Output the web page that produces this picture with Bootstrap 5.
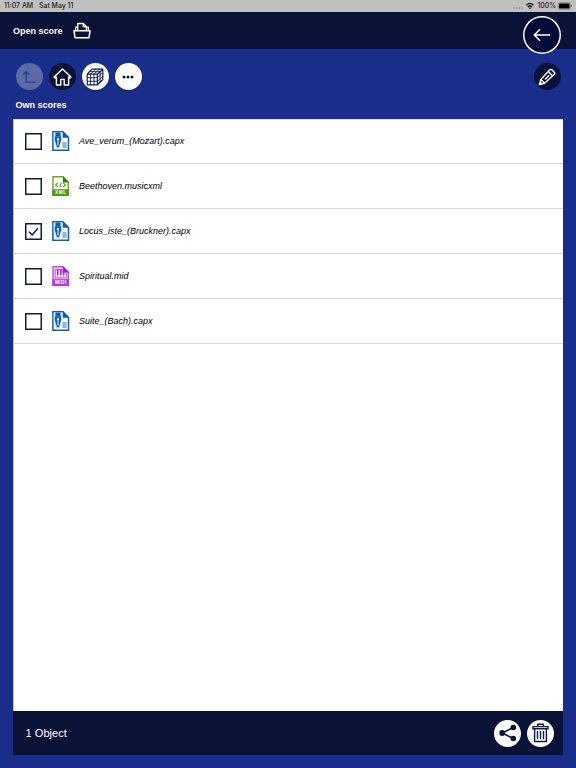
<!DOCTYPE html>
<html lang="en">
<head>
<meta charset="utf-8">
<meta name="viewport" content="width=device-width, initial-scale=1">
<title>Open score</title>
<link href="https://cdn.jsdelivr.net/npm/bootstrap@5.3.0/dist/css/bootstrap.min.css" rel="stylesheet">
<style>
body{font-family:"Liberation Sans",Arial,sans-serif;background:#1b2d8a;color:#fff;height:768px;overflow:hidden}
svg{display:block;flex:none}
.status-bar{height:12px;background:#c0c0c0;color:#1c1c1c;font:6.9px/12px Inter,sans-serif;padding:0 4px}
.status-bar .day{margin-left:6px}
.status-text{font-weight:500}
.title-bar{height:37px;background:#0a1237;padding:0 13px}
.title-text{font-size:9px;font-weight:700;line-height:12px;width:60px;white-space:nowrap}
.back-btn{top:16px;right:15px;width:38px;height:38px;border:0;box-shadow:inset 0 0 0 1.5px #fff;background:#030b38}
.tools{padding:14px 15.5px 0 15.5px;height:50px}
.round-btn{width:27px;height:27px;border:0;padding:0;border-radius:50%;display:flex;align-items:center;justify-content:center;flex:none}
.on-dark{background:#0a1237}
.on-light{background:#fff;box-shadow:0 1px 1px #0a123780}
.off{background:#5c6aa8}
.section-title{font-size:9px;font-weight:700;line-height:12px;padding-left:15.5px;height:20px}
.panel{margin:0 13px;width:550px}
.files{height:592px;background:#fff;border-top:1px solid #d9dae6;border-left:1px solid #b5bbd9;border-radius:0}
.files .list-group-item{height:45px;padding:0 0 0 11px;border:0;border-bottom:1px solid #d4d5d9;border-radius:0;color:#000;background:#fff}
.files .list-group-item:first-child{height:44px;padding-bottom:1px}
.files .tick{width:17px;height:17px;border:0;border-radius:0;margin:0;background:#fff;box-shadow:inset 0 0 0 1.5px #111a45}
.tick-wrap{width:17px;height:17px}
.tick-wrap svg{left:0;top:0;pointer-events:none}
.file-icon{margin-left:9.5px}
.file-name{font-size:9px;font-style:italic;line-height:12px;margin-left:9.5px}
.foot{height:44px;background:#0a1237;padding:0 9px 0 12.5px}
.foot-text{font-size:11.1px}
</style>
<script src="https://cdn.jsdelivr.net/npm/bootstrap@5.3.0/dist/js/bootstrap.bundle.min.js"></script>
</head>
<body>
<svg width="0" height="0" class="position-absolute" aria-hidden="true">
  <symbol id="capx" viewBox="0 0 18 20">
    <path d="M.9.8h10l5.6 5.8v12.6H.9z" fill="#fff" stroke="#0e5cab" stroke-width="1.5"/>
    <path d="M1.7 1.6h9v6L9 12 7 18.4H4.6L1.7 12z" fill="#cfe1f3"/>
    <path d="M3.5 1.5h5v3.4h-5zM3 5.2h6l.2 3.6-2.2 7.4H5L2.8 8.8z" fill="#0e5cab"/>
    <path d="M6 8v6.5" stroke="#fff" stroke-width="1"/><circle cx="6" cy="8" r="1.1" fill="#fff"/>
    <path d="M10.8.5 16.9 6.8h-6.1z" fill="#0e5cab"/>
    <path d="M10.3 12h4.4M10.3 14h4.4M10.3 16h4.4" stroke="#6ba0d5" stroke-width="1.3"/>
  </symbol>
</svg>

<div class="status-bar d-flex align-items-center">
  <span class="status-text">11:07 AM</span><span class="status-text day">Sat May 11</span>
  <div class="ms-auto d-flex align-items-center">
    <svg width="10" height="12" viewBox="0 0 10 12" fill="#8a8a8a"><circle cx="1" cy="8" r=".8"/><circle cx="3.7" cy="8" r=".8"/><circle cx="6.4" cy="8" r=".8"/><circle cx="9.1" cy="8" r=".8"/></svg>
    <svg class="wifi" width="14" height="12" viewBox="-3 0 14 12" fill="none" stroke="#111" stroke-width="1.3"><path d="M.5 5.2Q4 1.8 7.5 5.2M1.9 6.9Q4 5 6.1 6.9"/><path d="M3 7.8h2L4 9z" fill="#111" stroke-width=".3"/></svg>
    <span class="status-text">100%</span>
    <svg width="16" height="12" viewBox="0 0 16 12"><rect x="2.3" y="2.7" width="12" height="6.6" rx="1.6" fill="none" stroke="#666" stroke-width=".6"/><rect x="3" y="3.4" width="10.6" height="5.2" rx="1" fill="#050505"/><path d="M15.2 5v2" stroke="#666"/></svg>
  </div>
</div>

<header class="title-bar d-flex align-items-center">
  <div class="title-text">Open score</div>
  <svg width="18" height="18" viewBox="0 0 18 18" fill="none" stroke="#fff" stroke-width="1.3" stroke-linejoin="round">
    <path d="M4.7 8V1.5h5.7l2.9 3V8M10.2 1.7v3h3M2.6 9V5.2h2M13.3 5.2h2V9"/>
    <path d="M1 8.8h16l-1 6.9H2z" stroke-width="1.5"/>
  </svg>
</header>
<button class="back-btn position-absolute rounded-circle p-0 d-flex align-items-center justify-content-center" aria-label="Back">
  <svg width="18" height="14" viewBox="0 0 18 14" fill="none" stroke="#fff" stroke-width="1.5"><path d="M17 7H1.5M7 1.3 1.3 7 7 12.7"/></svg>
</button>

<div class="tools d-flex">
  <div class="d-flex" style="gap:6px">
    <button class="round-btn off" aria-label="Up"><svg width="15" height="14" viewBox="0 0 15 14" fill="none" stroke="#35458f" stroke-width="1.6"><path d="M1 4.8 4.2 1.4l3.2 3.4M4.2 1.6v10.6h9.6"/></svg></button>
    <button class="round-btn on-dark" aria-label="Home"><svg width="19" height="18" viewBox="0 0 19 18" fill="none" stroke="#fff" stroke-width="1.4" stroke-linejoin="round"><path d="M9.5 1 1 9.1l1 1 1.4-1.2V17h4.4v-5.6h3.4V17h4.4V8.9l1.4 1.2 1-1z"/></svg></button>
    <button class="round-btn on-light" aria-label="Cloud storage"><svg width="18" height="18" viewBox="0 0 18 18" fill="none" stroke="#101a4a" stroke-linejoin="round"><path stroke-width="1.2" d="M1.2 6.2h10.2v10.6H1.2zM1.2 6.2 6 1.2h10.8l-5.4 5M16.8 1.2v10.3l-5.4 5.3"/><path stroke-width=".9" d="M4.6 6.2v10.6M8 6.2v10.6M1.2 9.7h10.2M1.2 13.3h10.2M3.6 3.7h10.5v10.5M4.6 6.2l5-5M8 6.2l5.2-5M11.4 9.7l5.4-5.1M11.4 13.3l5.4-5.2"/></svg></button>
    <button class="round-btn on-light" aria-label="More"><svg width="12" height="4" viewBox="0 0 12 4" fill="#0a1237"><circle cx="2" cy="2" r="1.5"/><circle cx="6" cy="2" r="1.5"/><circle cx="10" cy="2" r="1.5"/></svg></button>
  </div>
  <button class="round-btn on-dark ms-auto" aria-label="Edit"><svg width="18" height="18" viewBox="0 0 18 18" fill="none" stroke="#fff" stroke-width="1.4" stroke-linejoin="round"><path d="m1.4 16.6 1.4-5.2L11.6 2q1.2-1.2 2.5-.1l2 2q1.1 1.3 0 2.5l-9.5 8.8zM2.8 11.4l3.8 3.8M10.3 3.5l4.2 4.2M7 11.4l4.2-4.2M1.5 16.5l2.2-.6-1.6-1.6z"/></svg></button>
</div>
<div class="section-title">Own scores</div>

<main class="panel">
  <div class="files list-group">
    <label class="list-group-item d-flex align-items-center"><input class="form-check-input tick" type="checkbox"><svg class="file-icon" width="18" height="20"><use href="#capx"/></svg><span class="file-name">Ave_verum_(Mozart).capx</span></label>
    <label class="list-group-item d-flex align-items-center"><input class="form-check-input tick" type="checkbox">
      <svg class="file-icon" width="18" height="20" viewBox="0 0 18 20">
        <path d="M1 .8h10l5.3 5.5v13H1z" fill="#fff" stroke="#65a829" stroke-width="1.4"/>
        <path d="M10.8.2 17 6.5h-6.2z" fill="#347c0c"/>
        <path d="M.3 13.2H17v6.6H.3z" fill="#529b0d"/>
        <path d="M5.8 7 3.6 8.9l2.2 1.9M11.2 7l2.2 1.9-2.2 1.9M9.3 6.4l-1.6 5" fill="none" stroke="#529b0d" stroke-width="1.1"/>
        <text x="8.8" y="18.3" fill="#fff" font-size="4.8" font-weight="700" text-anchor="middle" letter-spacing=".5">XML</text>
      </svg><span class="file-name">Beethoven.musicxml</span></label>
    <label class="list-group-item d-flex align-items-center"><span class="tick-wrap position-relative d-flex"><input class="form-check-input tick" type="checkbox" checked><svg class="position-absolute" width="17" height="17" viewBox="0 0 17 17" fill="none" stroke="#111a45" stroke-width="1.5"><path d="m4 8.8 3.2 3.1 5.7-6.6"/></svg></span><svg class="file-icon" width="18" height="20"><use href="#capx"/></svg><span class="file-name">Locus_iste_(Bruckner).capx</span></label>
    <label class="list-group-item d-flex align-items-center"><input class="form-check-input tick" type="checkbox">
      <svg class="file-icon" width="18" height="20" viewBox="0 0 18 20">
        <path d="M1 .8h10l5.3 5.5v13H1z" fill="#f3d3fa" stroke="#c74ee3" stroke-width="1.4"/>
        <path d="M10.8.2 17 6.5h-6.2z" fill="#a51dca"/>
        <path d="M3.2 3.5h7v3.2h4v5.2h-11z" fill="#fff" stroke="#bf42dd" stroke-width=".9"/>
        <path d="M5.8 3.5v5.6M8.8 3.5v5.6M11.7 6.5v2.6" stroke="#b42cd5" stroke-width="1.6"/>
        <path d="M5.8 9v3M8.8 9v3M11.7 9v3" stroke="#c74ee3" stroke-width=".7"/>
        <path d="M.3 13.2H17v6.6H.3z" fill="#bd32df"/>
        <text x="8.8" y="18.2" fill="#fff" font-size="4.8" font-weight="700" text-anchor="middle" letter-spacing=".4">MIDI</text>
      </svg><span class="file-name">Spiritual.mid</span></label>
    <label class="list-group-item d-flex align-items-center"><input class="form-check-input tick" type="checkbox"><svg class="file-icon" width="18" height="20"><use href="#capx"/></svg><span class="file-name">Suite_(Bach).capx</span></label>
  </div>
  <footer class="foot d-flex align-items-center">
    <span class="foot-text">1 Object</span>
    <div class="ms-auto d-flex" style="gap:6px">
      <button class="round-btn on-light" aria-label="Share"><svg width="18" height="18" viewBox="0 0 18 18" fill="#0a1237" stroke="#0a1237" stroke-width="1.6"><path d="M14.3 3.5 3.2 9l11.1 5.5" fill="none"/><circle cx="14.3" cy="3.5" r="2"/><circle cx="3.2" cy="9" r="2.1"/><circle cx="14.3" cy="14.5" r="2"/></svg></button>
      <button class="round-btn on-light" aria-label="Delete"><svg width="17" height="20" viewBox="0 0 17 20" fill="none" stroke="#101a4a" stroke-width="1.4"><path d="M1 3.6h15v2.2H1zM5.8 3.5V1.2h5.4v2.3M2.6 6v12.5h11.8V6M5.5 8v8.3M8.5 8v8.3M11.5 8v8.3"/></svg></button>
    </div>
  </footer>
</main>
</body>
</html>
